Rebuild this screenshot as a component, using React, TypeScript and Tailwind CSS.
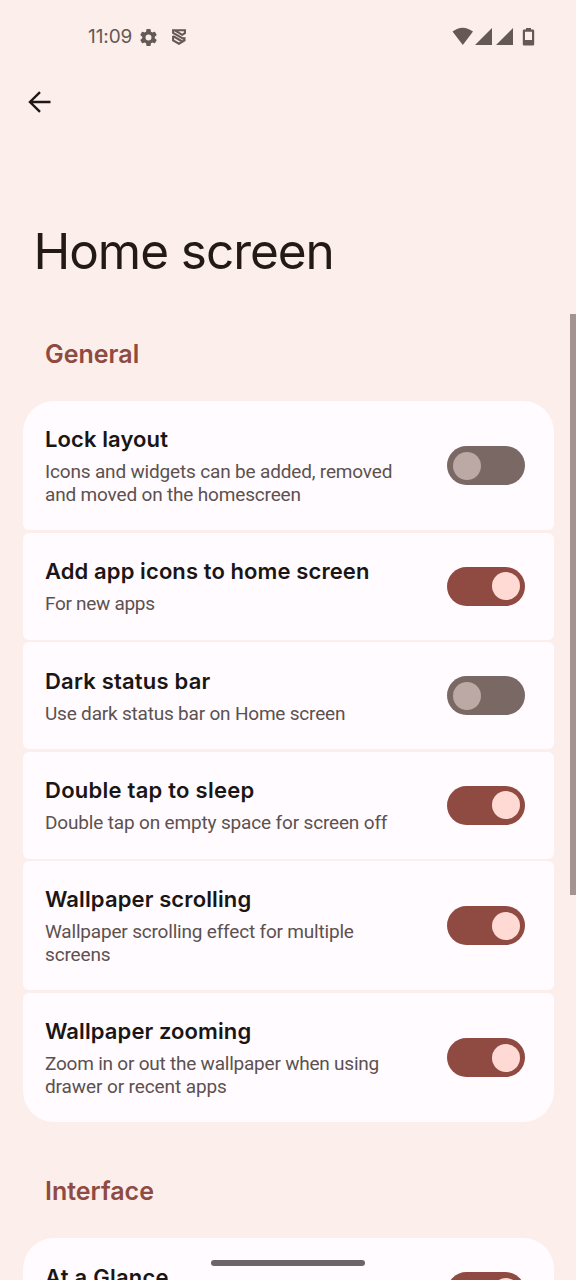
import React from "react";

type Item = { title: string; titleClass: string; lines: { text: string; cls: string }[]; on: boolean; h: string };

const general: Item[] = [
  { title: "Lock layout", titleClass: "tracking-[0.1px]", on: false, h: "h-[129.3px]", lines: [{ text: "Icons and widgets can be added, removed", cls: "tracking-[-0.17px]" }, { text: "and moved on the homescreen", cls: "tracking-[-0.17px]" }] },
  { title: "Add app icons to home screen", titleClass: "tracking-[0.1px]", on: true, h: "h-[106.8px]", lines: [{ text: "For new apps", cls: "tracking-[-0.3px]" }] },
  { title: "Dark status bar", titleClass: "tracking-[0.2px]", on: false, h: "h-[106.8px]", lines: [{ text: "Use dark status bar on Home screen", cls: "tracking-[-0.2px]" }] },
  { title: "Double tap to sleep", titleClass: "tracking-[0.25px]", on: true, h: "h-[106.8px]", lines: [{ text: "Double tap on empty space for screen off", cls: "tracking-[-0.16px]" }] },
  { title: "Wallpaper scrolling", titleClass: "tracking-[0.12px]", on: true, h: "h-[129.3px]", lines: [{ text: "Wallpaper scrolling effect for multiple", cls: "tracking-[-0.19px]" }, { text: "screens", cls: "tracking-[-0.15px]" }] },
  { title: "Wallpaper zooming", titleClass: "tracking-[0.1px]", on: true, h: "h-[129.3px]", lines: [{ text: "Zoom in or out the wallpaper when using", cls: "tracking-[-0.22px]" }, { text: "drawer or recent apps", cls: "tracking-[-0.1px]" }] },
];

function Switch({ on }: { on: boolean }) {
  return (
    <div role="switch" aria-checked={on} className={`flex h-[39px] w-[78px] shrink-0 items-center rounded-full px-[5.5px] ${on ? "justify-end bg-[#8f4a42]" : "justify-start bg-[#7a6865]"}`}>
      <div className={`size-7 rounded-full ${on ? "bg-[#ffdad4]" : "bg-[#bca8a5]"}`} />
    </div>
  );
}

function Row({ item }: { item: Item }) {
  return (
    <div className={`flex shrink-0 items-center justify-between rounded-[6px] bg-[#fffbff] pr-[28.2px] pl-[22.5px] ${item.h}`}>
      <div className="flex flex-col items-start whitespace-nowrap">
        <div className={`mb-[7px] font-[Inter,sans-serif] text-[22px] leading-[28px] font-semibold text-[#1a1615] ${item.titleClass}`}>{item.title}</div>
        {item.lines.map((l) => (
          <div key={l.text} className={`font-[Roboto,sans-serif] text-[19px] leading-[23px] text-[#5c514f] ${l.cls}`}>{l.text}</div>
        ))}
      </div>
      <Switch on={item.on} />
    </div>
  );
}

export default function App() {
  return (
    <div className="relative flex h-[1280px] w-[576px] flex-col overflow-hidden bg-[#fceeeb] font-[Inter,sans-serif]">
      <header className="flex h-[74px] shrink-0 items-center justify-between pr-[41px] pl-[88px] text-[#645956]">
        <div className="flex items-center">
          <span className="w-[50px] text-[19px] leading-6 tracking-[-0.1px]">11:09</span>
          <svg className="size-[21px]" viewBox="0 0 24 24" fill="currentColor"><path d="M19.14 12.94c.04-.3.06-.61.06-.94 0-.32-.02-.64-.07-.94l2.03-1.58a.49.49 0 0 0 .12-.61l-1.92-3.32a.49.49 0 0 0-.59-.22l-2.39.96a7 7 0 0 0-1.62-.94l-.36-2.54a.48.48 0 0 0-.48-.41h-3.84a.47.47 0 0 0-.47.41l-.36 2.54c-.59.24-1.13.57-1.62.94l-2.39-.96a.48.48 0 0 0-.59.22L2.74 8.87a.47.47 0 0 0 .12.61l2.03 1.58a6 6 0 0 0 0 1.88l-2.03 1.58a.49.49 0 0 0-.12.61l1.92 3.32c.12.22.37.29.59.22l2.39-.96c.5.38 1.03.7 1.62.94l.36 2.54c.05.24.24.41.48.41h3.84c.24 0 .44-.17.47-.41l.36-2.54c.59-.24 1.13-.56 1.62-.94l2.39.96c.22.08.47 0 .59-.22l1.92-3.32a.47.47 0 0 0-.12-.61zM12 15.4a3.4 3.4 0 1 1 0-6.8 3.4 3.4 0 0 1 0 6.8" /></svg>
          <svg className="ml-[13px] h-[16px] w-[14px]" viewBox="0 0 14 16" fill="none" stroke="currentColor" strokeWidth="2.1"><path d="M14 1.2H1.1v2.6l11.4 6.6M2.8 1.4l7.4 4.4L12.9 4.2V1.2M1.1 6.8v4.5L7 14.7l5.5-3.2V8.3M1.2 7.1l9 5.4" /></svg>
        </div>
        <svg className="h-[20px] w-[83px]" viewBox="452 27 83 20" fill="currentColor">
          <path d="M452.5 31.6Q462.5 24 473 31.6L462.8 45ZM492 28v17h-17zM513 28v17h-17z" />
          <path fillRule="evenodd" d="M526 28h5v1.6h2q1.2 0 1.2 1.2v13.4q0 1.2-1.2 1.2h-9q-1.2 0-1.2-1.2V30.8q0-1.2 1.2-1.2h2zM525 31.8v8.2h7v-8.2z" />
        </svg>
      </header>
      <div className="flex h-[56px] shrink-0 items-center pl-[28px]">
        <svg className="h-[22px] w-[23px]" viewBox="0 0 23 22" fill="none" stroke="#1d1715" strokeWidth="2.4"><path d="M22.5 11H2.5M12 1.2L2 11l10 9.8" /></svg>
      </div>
      <h1 className="mt-[89px] shrink-0 pl-[33.5px] text-[49.5px] leading-[64px] font-normal tracking-[-1.05px] whitespace-nowrap text-[#231a18]">Home screen</h1>
      <h2 className="mt-[54.5px] shrink-0 pl-[45px] text-[25px] leading-8 font-semibold text-[#8f4a42]">General</h2>
      <section className="mx-[22.5px] mt-[31.6px] flex shrink-0 flex-col gap-[2.6px] overflow-hidden rounded-[31px]">
        {general.map((i) => <Row key={i.title} item={i} />)}
      </section>
      <h2 className="mt-[52.8px] shrink-0 pl-[45px] text-[25px] leading-8 font-semibold text-[#8f4a42]">Interface</h2>
      <section className="mx-[22.5px] mt-[31px] shrink-0 overflow-hidden rounded-t-[31px]">
        <Row item={{ title: "At a Glance", titleClass: "tracking-[0.25px]", on: true, h: "h-[106.8px]", lines: [{ text: "", cls: "h-[23px]" }] }} />
      </section>
      <div className="absolute top-[314px] right-0 h-[581px] w-[6px] bg-[#a39491]" />
      <div className="absolute top-[1260px] left-[211px] h-[6px] w-[154px] rounded-full bg-[#6c6466]" />
    </div>
  );
}
